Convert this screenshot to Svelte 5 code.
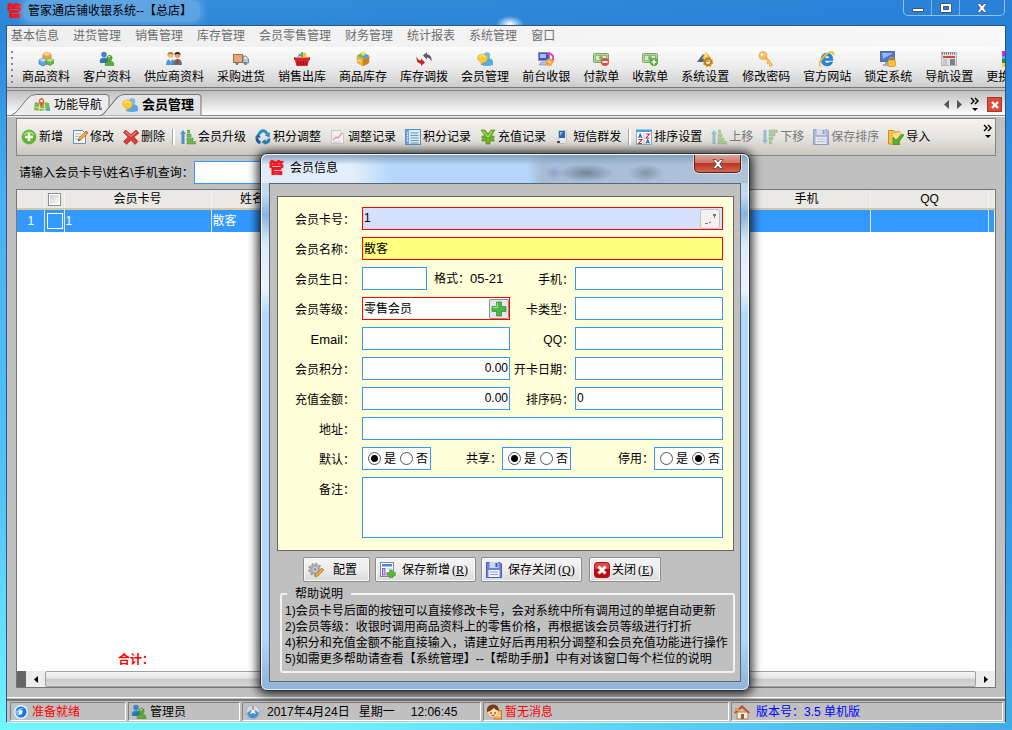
<script>
    const menus = ['基本信息', '进货管理', '销售管理', '库存管理', '会员零售管理', '财务管理', '统计报表', '系统管理', '窗口'];

    const tools = [
        { icon: 'boxes', label: '商品资料' },
        { icon: 'users', label: '客户资料' },
        { icon: 'suppliers', label: '供应商资料' },
        { icon: 'truck', label: '采购进货' },
        { icon: 'basket', label: '销售出库' },
        { icon: 'crate', label: '商品库存' },
        { icon: 'swap', label: '库存调拨' },
        { icon: 'member', label: '会员管理' },
        { icon: 'pos', label: '前台收银' },
        { icon: 'pay', label: '付款单' },
        { icon: 'receive', label: '收款单' },
        { icon: 'settings', label: '系统设置' },
        { icon: 'key', label: '修改密码' },
        { icon: 'ie', label: '官方网站' },
        { icon: 'lock', label: '锁定系统' },
        { icon: 'layout', label: '导航设置' },
        { icon: 'skin', label: '更换皮肤' }
    ];

    const actions = [
        { icon: 'add', label: '新增' },
        { icon: 'edit', label: '修改' },
        { icon: 'remove', label: '删除' },
        { separator: true },
        { icon: 'up', label: '会员升级' },
        { icon: 'recycle', label: '积分调整' },
        { icon: 'chart', label: '调整记录' },
        { icon: 'list', label: '积分记录' },
        { icon: 'yen', label: '充值记录' },
        { icon: 'phone', label: '短信群发' },
        { separator: true },
        { icon: 'sort', label: '排序设置' },
        { icon: 'up', label: '上移', disabled: true },
        { icon: 'down', label: '下移', disabled: true },
        { icon: 'save', label: '保存排序', disabled: true },
        { icon: 'import', label: '导入' }
    ];

    const help = [
        '1)会员卡号后面的按钮可以直接修改卡号，会对系统中所有调用过的单据自动更新',
        '2)会员等级：收银时调用商品资料上的零售价格，再根据该会员等级进行打折',
        '4)积分和充值金额不能直接输入，请建立好后再用积分调整和会员充值功能进行操作',
        '5)如需更多帮助请查看【系统管理】--【帮助手册】中有对该窗口每个栏位的说明'
    ];

    const banknote = '<rect x=".5" y="2.500" width="15" height="9" rx="1" fill="#b5d69c" stroke="#7ba568"/><rect x="2.500" y="4.500" width="11" height="5" fill="#d8ebc8" stroke="#8db87a"/><circle cx="8" cy="7" r="2" fill="#7fae6a"/>';
    const person = '<circle cx="0" cy="0" r="2.700"/><path d="M-4.300 7.500q-.5-4.500 4.300-4.500t4.300 4.500z"/>';

    const icons = {
        boxes: '<path d="M5 3l4-2 4 2v4l-4 2-4-2z" fill="#f0a344" stroke="#b8741e" stroke-width=".6"/><path d="M5 3l4 2 4-2-4-2z" fill="#ffd28a"/><path d="M1 9l4-2 4 2v4l-4 2-4-2z" fill="#5fa5e0" stroke="#2f6fae" stroke-width=".6"/><path d="M1 9l4 2 4-2-4-2z" fill="#b2dbfa"/><path d="M8 9l4-2 4 2v3l-4 2.500-4-2z" fill="#6cb843" stroke="#43862a" stroke-width=".6"/><path d="M8 9l4 2 4-2-4-2z" fill="#b4e48c"/>',
        users: `<g fill="#3d86c6" transform="translate(5 3.500)">${person}</g><path d="M2 9l7-2v5H1z" fill="#2f73b4"/><g fill="#5cae35" stroke="#34771c" stroke-width=".5" transform="translate(10.500 7)">${person}</g><path d="M9 6q1-1 2-.3" fill="none" stroke="#d8f5bd"/>`,
        suppliers: '<circle cx="4.500" cy="4" r="3" fill="#f0c090"/><path d="M1.500 4q0-3 3-3t3 3q-3-2-6 0" fill="#c57a22"/><path d="M0 14q0-6 4.500-6T9 14z" fill="#4c97dd"/><circle cx="11.500" cy="4" r="3" fill="#dfa376"/><path d="M8.500 4q0-3 3-3t3 3q-3-2-6 0" fill="#3a2418"/><path d="M7 14q0-6 4.500-6T16 14z" fill="#6b7076"/><path d="M11 8h1l.5 4-1 1-1-1z" fill="#c03028"/><path d="M3 8h3l-1.500 3z" fill="#fff"/>',
        truck: '<rect x=".5" y="3.500" width="9" height="8" fill="#e8a878" stroke="#a66a42"/><path d="M10 5h3l2.500 3v4H10z" fill="#b3cbe0" stroke="#5f7f9e" stroke-width=".8"/><path d="M11.500 6h1.500l1 2h-2.500z" fill="#eaf6ff"/><circle cx="4" cy="12.500" r="1.500" fill="#777"/><circle cx="12.500" cy="12.500" r="1.500" fill="#777"/>',
        basket: '<path d="M3 6l3-4 2 3z" fill="#4a9fe0"/><circle cx="10" cy="4" r="2.500" fill="#f3c72a"/><path d="M8 1v5" stroke="#3f9f3a" stroke-width="1.500"/><path d="M0 6h16v3h-1l-1.500 6h-11L1 9H0z" fill="#d8232a"/><path d="M1 6.500h14" stroke="#ff7e78"/><path d="M4 10v4M6.700 10v4M9.300 10v4M12 10v4" stroke="#8c1015"/>',
        crate: '<path d="M1.500 5L8 8v7.500L2 12z" fill="#efb13e"/><path d="M14.500 5L8 8v7.500L14 12z" fill="#c98320"/><path d="M1.500 5L6 2l2.500 2.500L8 8z" fill="#6cbf45"/><path d="M14.500 5L10 2 8 5v3z" fill="#4b9fe0"/><path d="M5 2l4-1.500L11 3 8 5z" fill="#f6dc5c"/><path d="M3 9l3 1.500" stroke="#fff0b8"/>',
        swap: '<path d="M7 4.500L11 1v2.200q5 .6 4.500 7.300Q14 6.600 11 6.400V8.500z" fill="#565b60"/><path d="M9 11.500L5 15v-2.200Q0 12.200.5 5.500 2 9.400 5 9.600V7.500z" fill="#cf1d22"/>',
        member: '<circle cx="10" cy="4.500" r="3.200" fill="#6fb9ee"/><path d="M4 14q0-7 6.500-7t5.500 7q-6 2-12 0z" fill="#5aa6e6"/><path d="M1.500 4.500q4-3 8 0 2 3 0 5.500-1.500 1.500-3.500 1.500L4 13.500v-2.500Q-1 9 1.500 4.500z" fill="#fbcb38" stroke="#eba91c" stroke-width=".6"/><path d="M2.500 5.500q3-2 6 0" stroke="#fff1a8" fill="none"/>',
        pos: '<rect x=".5" y="1.500" width="11" height="8" fill="#3c55c8" stroke="#8a93b8"/><rect x="2" y="3" width="6" height="4" fill="#a9bcff"/><path d="M3 11h7l2 3H1z" fill="#b9bfd6" stroke="#7f87a5" stroke-width=".6"/><path d="M9 4q2-3 5 0t0 6" fill="none" stroke="#e33bbb" stroke-width="2"/><path d="M8 9l4-2 4 3-3 5-5-1z" fill="#f5a03d"/><path d="M10 10l3 2" stroke="#fff"/>',
        pay: `${banknote}<circle cx="12" cy="11" r="4" fill="#e4503e"/><rect x="9.500" y="10" width="5" height="2" fill="#fff"/>`,
        receive: `${banknote}<circle cx="12" cy="11" r="4" fill="#5aa62c"/><path d="M9.500 11h5M12 8.500v5" stroke="#fff" stroke-width="1.600"/>`,
        settings: '<path d="M0 11L6 3l6 8z" fill="#47688f"/><path d="M5 7l4-6 5 6-4 4z" fill="#e9b534"/><path d="M9 1l1.500 6L7 8z" fill="#fff2ad"/><circle cx="11" cy="11" r="3.200" fill="none" stroke="#c98318" stroke-width="2.200"/><circle cx="11" cy="11" r="4.300" fill="none" stroke="#c98318" stroke-width="1.500" stroke-dasharray="1.700 1.700"/>',
        key: '<circle cx="5" cy="4.500" r="4" fill="#f5c265" stroke="#dba044" stroke-width=".7"/><circle cx="4" cy="3.500" r="1.200" fill="#fff"/><path d="M6 7l3-1 6 8-2 2-2-1v-2l-2 0v-2z" fill="#f0ae45"/><path d="M8 8l5 6" stroke="#ffe3a2"/>',
        ie: '<path d="M14 9.500H5.500q.3 2.500 2.900 2.500 1.700 0 2.300-1h3q-1.300 4-5.500 4-6-.2-6.200-6.500Q2.300 2.200 8.200 2q6 .3 5.800 7.500zM5.500 7.200h5.200Q10.400 4.800 8.100 4.800 5.800 4.800 5.500 7.200z" fill="#2286d8" fill-rule="evenodd" stroke="#14609e" stroke-width=".4"/><path d="M2 14.500Q-1 15 1.500 10 4 5 9 2.200q6-3 5.500 1.800" fill="none" stroke="#f3ba27" stroke-width="1.700"/>',
        lock: '<rect x=".5" y=".5" width="14" height="10" fill="#4a71dc" stroke="#5d6c92"/><path d="M2 2h11L3 8z" fill="#99b7ff"/><path d="M5 11h5v2h2v2H3v-2h2z" fill="#a2a9bd"/><path d="M9.500 9V7.500q2-2.500 4 0V9" fill="none" stroke="#d7901c" stroke-width="1.400"/><rect x="8" y="9" width="7.500" height="6.500" rx="1" fill="#f9c137" stroke="#cb8816" stroke-width=".6"/>',
        layout: '<rect x=".5" y="1.500" width="15" height="13" fill="#dfe0e2" stroke="#b5b8bc"/><path d="M1 2.500h14" stroke="#65696e" stroke-width="2" stroke-dasharray="1 1"/><path d="M2 6h12" stroke="#d04a3c" stroke-width="2"/><path d="M2 8h4v6H2z" fill="#c3c6ca"/><path d="M9 8h5v6H9z" fill="#7d8287"/>',
        skin: '<rect width="8" height="5" fill="#d52ad1"/><rect y="5" width="8" height="3" fill="#40b4ee"/><rect y="8" width="8" height="4" fill="#2f8f3f"/><rect y="12" width="8" height="4" fill="#f6d52c"/><rect x="8" width="8" height="16" fill="#e65b3f"/>',
        map: '<path d="M1 5l5 1 4-1 5 1 1 8-5-1-5 1-6-1z" fill="#77ba55"/><path d="M1 10l14 3M6 6l-1 8M10 5l1 8" stroke="#e9e29a" stroke-width="1.200"/><path d="M10 13l6-2v3z" fill="#4f9ad2"/><path d="M7.500 10Q4 5 5 3q2.500-4 5 0 1 2-2.500 7z" fill="#e4592c"/><circle cx="7.500" cy="4" r="1.300" fill="#fff"/>',
        add: '<circle cx="8" cy="8" r="7" fill="#62b62d" stroke="#5aa62c" stroke-width=".7"/><path d="M3 6q5-6 10 0" fill="none" stroke="#a4dd7b" stroke-width="1.500"/><path d="M4 8h8M8 4v8" stroke="#fff" stroke-width="2.600"/>',
        edit: '<path d="M1.500 1.500h9l3 3v10h-12z" fill="#f4f8fc" stroke="#6d8fb2"/><path d="M3 5h6M3 7.500h5M3 10h3" stroke="#a8bfd8"/><path d="M6 12l1-3 7-7 2 2-7 7z" fill="#f4ad34" stroke="#a66a12" stroke-width=".6"/><path d="M13 3l1.200-1.200 2 2L15 5z" fill="#e5645c"/><path d="M6 12l.7-2 1.300 1.300z" fill="#333"/>',
        remove: '<path d="M2.500 1L8 5.500 13 1l3 3-5 4 4 4.500-3 3L8 11l-4.500 4.500L.5 12.500 5 8 .5 3.500z" fill="#d93f3c" stroke="#a5201f" stroke-width=".6"/><path d="M3 3l5 4.500L13 3" fill="none" stroke="#f39a92"/>',
        up: '<path d="M0 5l3-4 3 4H4.500v10h-3V5z" fill="#4f94c7"/><path d="M7.500 1h2v3h-2zM7 5h4v3H7zM7 9h6v2.500H7zM7 12.500h8.500V15H7z" fill="#75b553" stroke="#4b8a31" stroke-width=".5"/>',
        down: '<path d="M0 11l3 4 3-4H4.500V1h-3v10z" fill="#4f94c7"/><path d="M7 1h8.500v2.500H7zM7 4.500h6V7H7zM7 8h4v3H7zM7.500 12h2v3h-2z" fill="#75b553" stroke="#4b8a31" stroke-width=".5"/>',
        recycle: '<path d="M4 5.500Q5.500 1.800 8 1.800t4 3" fill="none" stroke="#2f8cc8" stroke-width="3"/><path d="M14.800 3v5.500l-5-2z" fill="#2f8cc8"/><path d="M5.500 13.500Q1.800 13 2 8.500" fill="none" stroke="#1d6398" stroke-width="3"/><path d="M0 8.500L3 4.500 6 8.500z" fill="#1d6398"/><path d="M14 9.500q0 4-4 4" fill="none" stroke="#2a7fb8" stroke-width="3"/><path d="M10.500 10v6L6.500 13z" fill="#2a7fb8"/>',
        chart: '<path d="M1.500 1.500h9l3 3v10h-12z" fill="#f1eff0" stroke="#cbc8c9"/><path d="M3 11l3-3 2 1 4-5" fill="none" stroke="#df9a98" stroke-width="1.300"/><path d="M3 13h8" stroke="#d0cdcf"/>',
        list: '<rect x=".5" y=".5" width="15" height="15" fill="#d8eaf8" stroke="#5e90bd"/><path d="M1 1h3v14H1z" fill="#75a9d6"/><path d="M5.500 4h8M5.500 6.500h8M5.500 9h8M5.500 11.500h8M5.500 14h8" stroke="#6a98c0"/><path d="M2 4h1M2 6.500h1M2 9h1M2 11.500h1" stroke="#fff"/>',
        yen: '<path d="M1 1h4l3 4 3-4h4l-4 6h3v2h-4v1h4v2h-4v3H6v-3H2v-2h4V9H2V7h3z" fill="#75b929" stroke="#4b8c17" stroke-width=".7"/><path d="M3 2l5 6 4-6" fill="none" stroke="#b4e079"/>',
        phone: '<rect x="3.500" y="1.500" width="8" height="13" rx="1" fill="#e8ebee" stroke="#c0c5ca"/><rect x="4" y="2" width="6" height="7" fill="#2f68ad"/><path d="M5 3h3l-3 4z" fill="#87b7ec"/><path d="M2 13h3" stroke="#4a4e54" stroke-width="2"/>',
        sort: '<path d="M0 .5h16v3H0z" fill="#48a4de"/><path d="M.5 3v12.500h15V3" fill="#fff" stroke="#8fb0cb"/><path d="M8 4v11" stroke="#a9bdcd"/><path d="M2.500 9l1.700-4 1.800 4M3 8h2.500M10 14.500l1.700-4 1.800 4M10.500 13.300H13" fill="none" stroke="#2e63b5" stroke-width="1.100"/><path d="M10 5h3.500L10 9h3.500M2.500 10.500H6l-3.500 4H6" fill="none" stroke="#c9312c" stroke-width="1.100"/>',
        save: '<path d="M.5.500H14l1.500 1.500v13.500H.5z" fill="#6f83d6" stroke="#4a5cb4"/><rect x="3.500" y="0" width="9" height="6" fill="#c9d5f7"/><rect x="9.500" y="1" width="2" height="4" fill="#4559af"/><rect x="2.500" y="8" width="11" height="7" fill="#f5f7ff"/><path d="M4 10h8M4 12.500h8" stroke="#8c9bdc"/>',
        import: '<path d="M.5 1.500h5l2 1.500h4v12H.5z" fill="#f5c44a" stroke="#ca8b1b"/><path d="M4 5l8-3v10l-8 4z" fill="#ffdf83" stroke="#d59c2d" stroke-width=".6"/><path d="M5 8l3 3 6-6 2 1-6 8 2 1.500H5z" fill="#56b32a" stroke="#35801a" stroke-width=".6"/>',
        plus: '<path d="M5.500 1h5v4.500H15v5h-4.500V15h-5v-4.500H1v-5h4.500z" fill="#4fb348" stroke="#2f8b33" stroke-width=".7"/><path d="M6.500 2v4.500H2" fill="none" stroke="#a9e49f"/>',
        gear: '<circle cx="7" cy="7.500" r="4" fill="#dcdee0" stroke="#a7abae" stroke-width="3"/><circle cx="7" cy="7.500" r="6" fill="none" stroke="#92979b" stroke-width="1.600" stroke-dasharray="2 2"/><circle cx="7" cy="7.500" r="1.500" fill="#8d9296"/><path d="M7 15l1-3 6-6 2 2-6 6z" fill="#f0a43a" stroke="#b47219" stroke-width=".6"/>',
        form: '<rect x=".5" y=".5" width="13" height="14" fill="#fff" stroke="#80878f"/><rect x="2" y="2" width="10" height="2.500" fill="#3b8ce0"/><rect x="2.500" y="6.500" width="2.500" height="6.500" fill="#d9b4ff" stroke="#914ce6"/><path d="M7 7h5" stroke="#b4bcc4"/><path d="M9.500 8h3v2.500H15.500v3H12.500V16h-3v-2.500H6.700v-3h2.800z" fill="#59b637" stroke="#3d8f22" stroke-width=".5"/>',
        close: '<rect width="16" height="16" rx="4" fill="#b50f14"/><path d="M1 7V4q0-3 3-3h8q3 0 3 3v3z" fill="#e0484a"/><path d="M4.500 4.500l7 7M11.500 4.500l-7 7" stroke="#fff" stroke-width="3"/>',
        ready: '<circle cx="8" cy="8" r="7.500" fill="#eef3f8" stroke="#b4c1ce"/><circle cx="8" cy="8" r="5.500" fill="#1b7bd2"/><path d="M3 7q4-4 9-3-4 0-4 4l-2 4q-3-1-3-5z" fill="#7ec8ff"/><path d="M6 6.500h4l-1.500 4H6z" fill="#fff"/>',
        clock: '<circle cx="8" cy="8" r="7" fill="#d3dde8" stroke="#9eb0c4"/><path d="M2 9q6-6 12 0-1 5-6 5.500Q3 14 2 9z" fill="#478fce"/><path d="M5 10l3-6 3 6-3-1z" fill="#fff"/><path d="M8 2v4" stroke="#e3674f" stroke-width="1.500"/>',
        message: '<rect x="8.500" y="6.500" width="7" height="8.500" fill="#f6b65e" stroke="#c47b1e"/><path d="M10 9h4M10 11.500h4" stroke="#fff2d5"/><circle cx="7" cy="8" r="5.500" fill="#fde0ab" stroke="#d99642" stroke-width=".6"/><path d="M1 8Q0 1 6.500.5 13 0 13 7 9 6 8 4 5 7 1 8z" fill="#7d3b1b"/><circle cx="5" cy="9" r=".8"/><circle cx="9" cy="9" r=".8"/><path d="M5.500 11q1.500 1.200 3 0" stroke="#c22" fill="none"/>',
        home: '<path d="M3 8h11v7H3z" fill="#f7ead3" stroke="#a98255"/><path d="M0 8.500L8 1l8 7.500-1.500 1L8 4 1.500 9.500z" fill="#c14d23"/><path d="M7 10h3v5H7z" fill="#9c5a2c"/><path d="M1 4h4v3H1z" fill="#e89a3c"/>'
    };

    let keyword = $state('');
    let member = $state({
        card: '1', name: '散客', birthday: '', phone: '', level: '零售会员', cardType: '', email: '', qq: '',
        points: '0.00', opened: '', balance: '0.00', order: '0', address: '', isDefault: '是', shared: '是', stopped: '否', remark: ''
    });
</script>

{#snippet icon(name)}
    <svg class="icon" viewBox="0 0 16 16" fill="#222" aria-hidden="true">{@html icons[name]}</svg>
{/snippet}

{#snippet field(id, label, cls = '')}
    <label for={id}>{label}：</label>
    <input {id} class={cls} type="text" bind:value={member[id]}>
{/snippet}

{#snippet choice(id, label)}
    <div class="choice" role="radiogroup" aria-label={label}>
        {#each ['是', '否'] as option}
            <label><input type="radio" name={id} value={option} bind:group={member[id]}>{option}</label>
        {/each}
    </div>
{/snippet}

{#snippet more()}
    <svg class="more" viewBox="0 0 9 15" aria-hidden="true">
        <path d="M1 1l3 3-3 3M5 1l3 3-3 3" fill="none" stroke="#000" stroke-width="1.400" />
        <path d="M2 11h6l-3 3z" />
    </svg>
{/snippet}

<div class="window">
    <header class="titlebar">
        <span class="logo">管</span>
        <h1>管家通店铺收银系统--【总店】</h1>
        <div class="window-buttons">
            <button aria-label="最小化"><svg viewBox="0 0 12 10"><path d="M.5 5.500h11v3H.5z" fill="#fff" stroke="#456" /></svg></button>
            <button aria-label="最大化"><svg viewBox="0 0 12 10"><path d="M.5.500h11v9H.5zM3.500 3.500h5v3h-5z" fill="#fff" fill-rule="evenodd" stroke="#456" /></svg></button>
            <button class="wide" aria-label="关闭系统"><svg viewBox="0 0 12 10"><path d="M1 .5h3l2 2.500L8 .5h3L7.800 5 11 9.500H8L6 7 4 9.500H1L4.200 5z" fill="#fff" stroke="#456" stroke-width=".8" /></svg></button>
        </div>
    </header>

    <div class="client">
        <nav class="menu">
            {#each menus as item}
                <button>{item}</button>
            {/each}
        </nav>

        <div class="tools">
            {#each tools as tool}
                <button>{@render icon(tool.icon)}<span>{tool.label}</span></button>
            {/each}
        </div>

        <div class="tabs">
            <button class="tab">
                <svg class="shape" viewBox="0 0 98 21" preserveAspectRatio="none"><path d="M0 20.500Q3 20 6 16L16 4Q19 .5 24 .5h70q3 0 3 3v17" /></svg>
                <span>{@render icon('map')}功能导航</span>
            </button>
            <button class="tab active">
                <svg class="shape" viewBox="0 0 98 21" preserveAspectRatio="none"><path d="M0 20.500Q3 20 6 16L16 4Q19 .5 24 .5h70q3 0 3 3v17" /></svg>
                <span>{@render icon('member')}会员管理</span>
            </button>
            <div class="tab-controls">
                <button aria-label="上一个"><svg width="5" height="9"><path d="M5 0v9L0 4.500z" fill="#555" /></svg></button>
                <button aria-label="下一个"><svg width="5" height="9"><path d="M0 0v9l5-4.500z" fill="#555" /></svg></button>
                <button aria-label="更多标签">{@render more()}</button>
                <button class="tab-close" aria-label="关闭标签"><svg width="8" height="8"><path d="M1 1l6 6M7 1L1 7" stroke="#fff" stroke-width="2.400" /></svg></button>
            </div>
        </div>

        <main>
            <div class="actions">
                {#each actions as action}
                    {#if action.separator}
                        <i></i>
                    {:else}
                        <button disabled={action.disabled}>{@render icon(action.icon)}{action.label}</button>
                    {/if}
                {/each}
                <button class="overflow" aria-label="更多操作">{@render more()}</button>
            </div>

            <div class="search">
                <label for="keyword">请输入会员卡号\姓名\手机查询：</label>
                <input id="keyword" type="text" bind:value={keyword}>
            </div>

            <div class="sheet">
                <table>
                    <colgroup>
                        <col class="col-no"><col class="col-check"><col class="col-card"><col class="col-name">
                        <col><col class="col-phone"><col class="col-qq"><col class="col-end">
                    </colgroup>
                    <thead>
                        <tr>
                            <th></th>
                            <th><input type="checkbox" aria-label="全选"></th>
                            <th>会员卡号</th>
                            <th>姓名</th>
                            <th></th>
                            <th>手机</th>
                            <th>QQ</th>
                            <th></th>
                        </tr>
                    </thead>
                    <tbody>
                        <tr>
                            <td class="no">1</td>
                            <td><input type="checkbox" aria-label="选择散客"></td>
                            <td>1</td>
                            <td>散客</td>
                            <td></td>
                            <td></td>
                            <td></td>
                            <td></td>
                        </tr>
                    </tbody>
                </table>
                <p class="total">合计：</p>
                <div class="scrollbar">
                    <span class="corner"></span>
                    <button aria-label="向左滚动"><svg width="4" height="7"><path d="M4 0v7L0 3.500z" /></svg></button>
                    <span class="thumb"></span>
                    <button aria-label="向右滚动"><svg width="4" height="7"><path d="M0 0v7l4-3.500z" /></svg></button>
                </div>
            </div>
        </main>

        <footer>
            <div class="cell ready">{@render icon('ready')}准备就绪</div>
            <div class="cell user">{@render icon('users')}管理员</div>
            <div class="cell date">{@render icon('clock')}<span>2017年4月24日</span><span>星期一</span><time>12:06:45</time></div>
            <div class="cell message">{@render icon('message')}暂无消息</div>
            <div class="cell version">{@render icon('home')}版本号：3.5 单机版</div>
        </footer>
    </div>

    <div class="dialog" role="dialog" aria-labelledby="dialog-title">
        <header>
            <span class="logo">管</span>
            <h2 id="dialog-title">会员信息</h2>
            <button class="dialog-close" aria-label="关闭窗口"><svg viewBox="0 0 12 10"><path d="M1 .5h3l2 2.500L8 .5h3L7.800 5 11 9.500H8L6 7 4 9.500H1L4.200 5z" fill="#fff" stroke="#444" stroke-width=".8" /></svg></button>
        </header>

        <div class="dialog-body">
            <form>
                <label for="card">会员卡号：</label>
                <div class="picker locked">
                    <input id="card" type="text" bind:value={member.card}>
                    <button type="button" class="change" aria-label="修改卡号"><svg width="16" height="16"><path d="M11 3h3v2h-1v2h-1V5h-1zM3 12h3v1H3zM7 11h2v1H7z" fill="#777" /></svg></button>
                </div>

                {@render field('name', '会员名称', 'full required')}

                <label for="birthday">会员生日：</label>
                <div class="birthday">
                    <input id="birthday" type="text" bind:value={member.birthday}>
                    <span>格式：<span class="latin">05-21</span></span>
                </div>
                {@render field('phone', '手机')}

                <label for="level">会员等级：</label>
                <div class="picker">
                    <input id="level" type="text" bind:value={member.level}>
                    <button type="button" aria-label="新增等级">{@render icon('plus')}</button>
                </div>
                {@render field('cardType', '卡类型')}

                <label for="email"><span class="latin">Email</span>：</label>
                <input id="email" type="text" bind:value={member.email}>
                {@render field('qq', 'QQ')}

                {@render field('points', '会员积分', 'number')}
                {@render field('opened', '开卡日期')}
                {@render field('balance', '充值金额', 'number')}
                {@render field('order', '排序码')}
                {@render field('address', '地址', 'full')}

                <span class="caption">默认：</span>
                <div class="choices">
                    {@render choice('isDefault', '默认')}
                    <div>共享：{@render choice('shared', '共享')}</div>
                    <div class="last">停用：{@render choice('stopped', '停用')}</div>
                </div>

                <label for="remark">备注：</label>
                <textarea id="remark" class="full" bind:value={member.remark}></textarea>
            </form>

            <div class="buttons">
                <button class="config">{@render icon('gear')}配置</button>
                <button>{@render icon('form')}<span>保存新增<kbd>(<u>R</u>)</kbd></span></button>
                <button>{@render icon('save')}<span>保存关闭<kbd>(<u>Q</u>)</kbd></span></button>
                <button class="quit">{@render icon('close')}<span>关闭<kbd>(<u>E</u>)</kbd></span></button>
            </div>

            <fieldset>
                <legend>帮助说明</legend>
                {#each help as line}
                    <p>{line}</p>
                {/each}
            </fieldset>
        </div>
    </div>
</div>

<style>
    :global(body) {
        margin: 0;
    }

    .window {
        position: relative;
        display: flex;
        flex-direction: column;
        box-sizing: border-box;
        min-height: 100vh;
        padding: 0 6px 7px;
        overflow: hidden;
        font: 12px/16px "Liberation Sans", "Noto Sans CJK SC", sans-serif;
        color: #000;
        background:
            radial-gradient(ellipse 14px 8px at 510px 24px, #fff, transparent),
            linear-gradient(to right, transparent 30%, rgba(34, 124, 214, 0.6)),
            linear-gradient(#348bd9, #2b86d8 30px, #49b0f3 200px, #52c4f7 500px, #6ff6ff);
    }

    button, input, textarea {
        font: inherit;
        color: inherit;
        box-sizing: border-box;
    }

    button {
        padding: 0;
        border: none;
        background: none;
        white-space: nowrap;
    }

    h1, h2, p {
        margin: 0;
        font-size: 12px;
        font-weight: 400;
    }

    svg {
        display: block;
        flex: none;
    }

    .icon {
        width: 16px;
        height: 16px;
    }

    .latin {
        font-size: 13px;
    }

    .logo {
        width: 16px;
        font-size: 15px;
        font-weight: 900;
        color: #f0141e;
        text-shadow: 0 0 1px #f0141e;
    }

    .titlebar {
        display: flex;
        align-items: flex-start;
        height: 25px;
    }

    .titlebar .logo {
        margin-top: 3px;
        margin-left: 1px;
    }

    .titlebar h1 {
        padding: 3px 8px 3px 5px;
        border-radius: 8px;
        background: rgba(255, 255, 255, 0.22);
        box-shadow: 0 0 8px 3px rgba(255, 255, 255, 0.22);
    }

    .window-buttons {
        display: flex;
        margin-left: auto;
        margin-right: 1px;
        border: 1px solid #8fc3ee;
        border-top: none;
        border-radius: 0 0 5px 5px;
    }

    .window-buttons button {
        display: flex;
        align-items: center;
        justify-content: center;
        width: 28px;
        height: 15px;
        border-right: 1px solid #7db4e4;
    }

    .window-buttons .wide {
        width: 44px;
        border: none;
    }

    .window-buttons svg {
        width: 12px;
        height: 10px;
    }

    .client {
        flex: 1;
        display: flex;
        flex-direction: column;
        border: 1px solid #2d567c;
        border-bottom-color: #d8f6fa;
        background: #c0c0c0;
    }

    .menu {
        display: flex;
        gap: 14px;
        padding: 2px 4px 3px;
        color: #6e6e6e;
        background: linear-gradient(to right, #efefef, #f8f8f8);
    }

    .tools {
        display: flex;
        gap: 13px;
        padding: 4px 0 2px 15px;
        overflow: hidden;
        border-bottom: 1px solid #777;
        background:
            radial-gradient(circle, #888 1px, transparent 1px) 3px 3px / 4px 4px no-repeat,
            radial-gradient(circle, #888 1px, transparent 1px) 3px 9px / 4px 4px no-repeat,
            radial-gradient(circle, #888 1px, transparent 1px) 3px 15px / 4px 4px no-repeat,
            radial-gradient(circle, #888 1px, transparent 1px) 3px 21px / 4px 4px no-repeat,
            radial-gradient(circle, #888 1px, transparent 1px) 3px 27px / 4px 4px no-repeat,
            radial-gradient(circle, #888 1px, transparent 1px) 3px 33px / 4px 4px no-repeat,
            linear-gradient(#fdfdfd, #ececec 50%, #cdcdcd);
    }

    .tools button {
        display: flex;
        flex-direction: column;
        align-items: center;
        gap: 2px;
    }

    .tabs {
        display: flex;
        align-items: flex-end;
        height: 21px;
        margin-top: 2px;
        padding: 3px 3px 0 5px;
        border-top: 1px solid #868686;
        border-bottom: 1px solid #868686;
        background: linear-gradient(#bfbfbf, #fff);
    }

    .tab {
        display: grid;
        width: 98px;
        height: 21px;
    }

    .tab > * {
        grid-area: 1 / 1;
    }

    .tab span {
        display: flex;
        align-items: center;
        gap: 4px;
        padding-left: 22px;
    }

    .shape {
        width: 100%;
        height: 21px;
        fill: #ececec;
        stroke: #777;
    }

    .tab.active {
        width: 102px;
        height: 22px;
        margin-bottom: -1px;
        margin-left: -10px;
        font-size: 13px;
        font-weight: 700;
    }

    .active .shape {
        height: 22px;
        fill: #e4e4e4;
    }

    .tab-controls {
        display: flex;
        align-items: center;
        align-self: center;
        gap: 8px;
        margin-left: auto;
    }

    .more {
        width: 9px;
        height: 15px;
    }

    .tab-close {
        display: flex;
        align-items: center;
        justify-content: center;
        width: 15px;
        height: 15px;
        border: 1px solid #a33a2c;
        background: #dd4c38;
    }

    main {
        flex: 1;
        display: flex;
        flex-direction: column;
        padding: 1px 9px 9px;
        border-top: 1px solid #f4f4f4;
        border-bottom: 1px solid #fff;
    }

    .actions {
        display: flex;
        align-items: center;
        height: 36px;
        overflow: hidden;
        border: 1px solid #858585;
        background: linear-gradient(#f5f4f2, #e6e4df 50%, #cac7c0);
    }

    .actions button {
        display: flex;
        align-items: center;
        gap: 2px;
        padding: 0 5px 0 4px;
    }

    .actions button:disabled {
        color: #777;
    }

    .actions button:disabled svg {
        opacity: 0.5;
    }

    .actions i {
        width: 2px;
        height: 16px;
        margin: 0 1px 0 2px;
        border-left: 1px solid #aaa;
        background: #fff;
    }

    .actions .overflow {
        align-self: flex-start;
        margin-top: 5px;
        margin-left: auto;
        padding: 0 3px;
    }

    .search {
        display: flex;
        align-items: center;
        padding: 5px 0 5px 3px;
    }

    .search input {
        width: 340px;
        height: 23px;
        border: 1px solid #3399ff;
        background: #fff;
    }

    .sheet {
        flex: 1;
        display: flex;
        flex-direction: column;
        border: 1px solid #777;
        background: #fff;
    }

    table {
        width: 100%;
        table-layout: fixed;
        border-collapse: collapse;
    }

    .col-no {
        width: 27px;
    }

    .col-check {
        width: 20px;
    }

    .col-card {
        width: 147px;
    }

    .col-name {
        width: 82px;
    }

    .col-phone {
        width: 128px;
    }

    .col-qq {
        width: 118px;
    }

    .col-end {
        width: 6px;
    }

    th {
        height: 18px;
        padding: 0;
        font-weight: 400;
        border-right: 1px solid #f4f3f0;
        border-bottom: 2px solid #d5c6a4;
        background: #ebe9e6;
    }

    td {
        height: 22px;
        padding: 0 0 0 1px;
        color: #fff;
        border-right: 1px solid #e5e9ee;
        background: #3399ff;
    }

    .no {
        text-align: center;
    }

    table input {
        display: block;
        appearance: none;
        width: 13px;
        height: 13px;
        margin: 0 auto;
        border: 1px solid #8b8f94;
        background: linear-gradient(135deg, #c8ccd2, #fff);
        box-shadow: inset 0 0 0 1px #fff;
    }

    td input {
        width: 16px;
        height: 16px;
        border-color: #fff;
        background: none;
        box-shadow: none;
    }

    .total {
        margin-top: auto;
        padding: 0 0 3px 101px;
        font-weight: 700;
        color: #f00;
    }

    .scrollbar {
        display: flex;
        height: 16px;
        background: #ededed;
    }

    .corner {
        width: 9px;
        background: #666;
    }

    .scrollbar button {
        display: flex;
        align-items: center;
        justify-content: center;
        width: 19px;
    }

    .thumb {
        flex: 1;
        box-sizing: border-box;
        border: 1px solid #a0a0a0;
        border-radius: 2px;
        background: linear-gradient(#f5f5f5, #e6e6e6 45%, #cacaca 50%, #d8d8d8);
    }

    footer {
        display: flex;
        gap: 2px;
        padding: 1px 2px 1px 3px;
        margin-top: 1px;
        border-top: 2px solid #777;
    }

    .cell {
        display: flex;
        align-items: center;
        gap: 3px;
        box-sizing: border-box;
        height: 19px;
        padding-left: 2px;
        white-space: nowrap;
        border: 1px solid #808080;
        border-right-color: #fff;
        border-bottom-color: #fff;
    }

    .ready {
        width: 116px;
        color: #f00;
    }

    .user {
        width: 112px;
    }

    .date {
        width: 239px;
    }

    .date span {
        margin: 0 3px;
    }

    .date time {
        margin-left: 10px;
    }

    .message {
        width: 246px;
        color: #f00;
    }

    .version {
        flex: 1;
        gap: 6px;
        color: #00f;
    }

    .dialog {
        position: absolute;
        top: 153px;
        left: 0;
        right: 2px;
        box-sizing: border-box;
        width: 490px;
        margin: 0 auto;
        padding: 0 8px 8px;
        border: 1px solid #26313c;
        border-radius: 7px;
        background: linear-gradient(#b9cde2, #c5dbf2 40px, #88b4e2 60px, #dcebfa 90px, #eaf3fd 135px, #b4d8fc 160px, #b4d8fc 90%, #8fb3d8);
        box-shadow: inset 0 0 0 1px rgba(255, 255, 255, 0.8), 0 1px 10px 3px rgba(0, 0, 0, 0.75);
    }

    .dialog header {
        display: flex;
        align-items: flex-start;
        height: 28px;
        margin: 1px -7px 0;
        padding: 0 7px;
        border-radius: 6px 6px 0 0;
        background:
            radial-gradient(ellipse 9px 7px at 292px 18px, rgba(128, 128, 190, 0.5), transparent),
            radial-gradient(ellipse 28px 9px at 324px 18px, rgba(70, 85, 105, 0.55), transparent),
            radial-gradient(ellipse 18px 9px at 384px 18px, rgba(90, 105, 125, 0.5), transparent),
            linear-gradient(rgba(130, 155, 185, 0.9), rgba(180, 200, 220, 0) 10px),
            linear-gradient(to right, #e0ebf8, #e4effb 90px, #b4d7fb 130px, #b4d7fb 265px, #a6bdd6 280px, #afc3d8);
    }

    .dialog .logo {
        margin-top: 5px;
    }

    .dialog h2 {
        padding: 5px 0 0 5px;
    }

    .dialog-close {
        display: flex;
        align-items: center;
        justify-content: center;
        width: 47px;
        height: 18px;
        margin-left: auto;
        border: 1px solid #57231e;
        border-top: none;
        border-radius: 0 0 5px 5px;
        background: linear-gradient(#dda59b, #cf7466 45%, #b93422 50%, #d5674f);
        box-shadow: 0 0 0 1px rgba(255, 255, 255, 0.5);
    }

    .dialog-close svg {
        width: 12px;
        height: 10px;
    }

    .dialog-body {
        padding: 12px 6px 8px 7px;
        border: 1px solid #5d6670;
        background: #c0c0c0;
    }

    form {
        display: grid;
        grid-template-columns: 84px 148px 65px 1fr;
        row-gap: 7px;
        padding: 10px 10px 12px 0;
        border: 1px solid #666;
        background: #ffffd9;
    }

    form > label, .caption {
        padding: 5px 7px 0 0;
        text-align: right;
        white-space: nowrap;
    }

    label[for="phone"], label[for="cardType"], label[for="qq"], label[for="opened"], label[for="order"] {
        padding-right: 1px;
    }

    form input[type="text"], textarea {
        width: 100%;
        min-width: 0;
        height: 23px;
        padding: 0 1px 2px;
        border: 1px solid #3399ff;
        border-radius: 0;
        outline: none;
        background: #fff;
    }

    form .full, .locked, .choices {
        grid-column: 2 / -1;
    }

    form input.required[type="text"] {
        border-color: #f00;
        background: #ffff80;
    }

    form .number {
        text-align: right;
    }

    textarea {
        display: block;
        resize: none;
    }

    form textarea.full {
        height: 61px;
    }

    .picker {
        display: flex;
        align-items: center;
        box-sizing: border-box;
        height: 23px;
        border: 1px solid #f00;
        background: #fff;
    }

    form .picker input[type="text"] {
        flex: 1;
        height: 21px;
        border: none;
        background: none;
    }

    .picker button {
        display: flex;
        align-items: center;
        justify-content: center;
        width: 20px;
        height: 20px;
        border: 1px solid #8e8f8f;
        border-radius: 2px;
        background: #e7e5e5;
    }

    .locked {
        padding-right: 2px;
        background: #d5e1fb;
    }

    .picker .change {
        border-color: #c3c3c3;
        border-radius: 3px;
        background: #f3f2ee;
    }

    .birthday {
        display: flex;
        align-items: center;
        gap: 7px;
        white-space: nowrap;
    }

    form .birthday input[type="text"] {
        width: 65px;
    }

    .choices {
        display: flex;
        gap: 35px;
    }

    .choices > div {
        display: flex;
        align-items: center;
    }

    .choices .last {
        margin-left: auto;
    }

    .choice {
        display: flex;
        align-items: center;
        gap: 4px;
        box-sizing: border-box;
        height: 23px;
        padding: 0 2px 0 5px;
        border: 1px solid #3399ff;
        background: #fff;
    }

    .choice label {
        display: flex;
        align-items: center;
        gap: 3px;
    }

    .choice input {
        appearance: none;
        width: 13px;
        height: 13px;
        margin: 0;
        border: 1px solid #555;
        border-radius: 50%;
        background: #fff;
    }

    .choice input:checked {
        background: radial-gradient(circle, #000 3px, #fff 4px);
    }

    .buttons {
        display: flex;
        gap: 5px;
        padding: 6px 0 0 26px;
    }

    .buttons button {
        display: flex;
        align-items: center;
        gap: 6px;
        width: 101px;
        height: 25px;
        padding-left: 4px;
        border: 1px solid #8c8c8c;
        border-radius: 2px;
        background: linear-gradient(#f4f4f4, #ededed 50%, #dadada);
        box-shadow: inset 0 0 0 1px #fafafa;
    }

    .buttons .config {
        gap: 9px;
        width: 67px;
    }

    .buttons .quit {
        gap: 2px;
        width: 72px;
        margin-left: 2px;
    }

    kbd {
        margin-left: 2px;
        font: 12px "Liberation Serif", serif;
    }

    fieldset {
        min-width: 0;
        margin: 4px -1px 0 3px;
        padding: 1px 0 4px 3px;
        border: 2px solid #f2f2f2;
        border-radius: 3px;
    }

    fieldset p {
        white-space: nowrap;
    }

    legend {
        margin-left: 2px;
        padding: 0 8px;
    }
</style>
